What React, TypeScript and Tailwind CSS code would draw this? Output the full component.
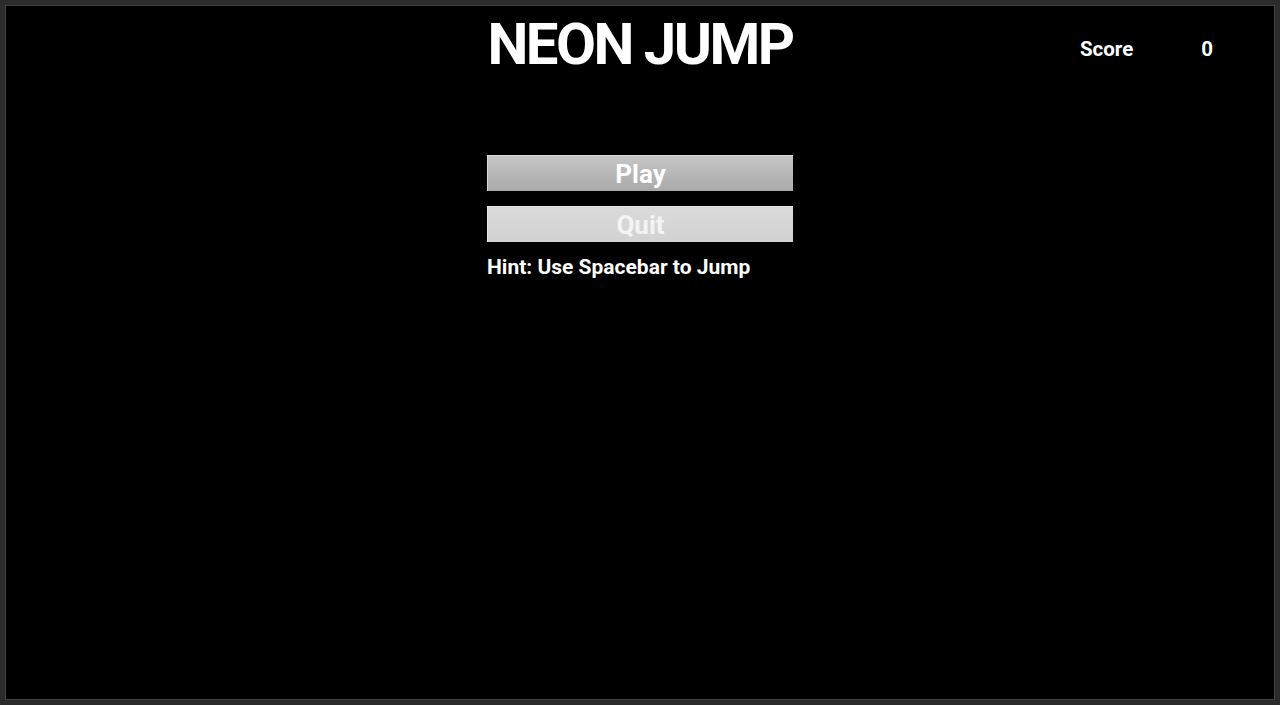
import { useState } from 'react';

export default function App() {
  const [score] = useState(0);

  return (
    <div
      className="h-[705px] w-full bg-black border-[5px] border-[#2b2b2b] shadow-[inset_0_0_0_1px_#404040] text-white"
      style={{ fontFamily: 'Roboto, "Liberation Sans", sans-serif' }}
    >
      <div className="grid grid-cols-[1fr_306px_1fr] pt-[9px]">
        <div />
        <div className="flex flex-col">
          <h1 className="text-center whitespace-nowrap text-[58px] leading-[60px] font-bold tracking-[-2.5px]">
            NEON JUMP
          </h1>
          <button className="mt-[81px] h-[36px] w-full border-t border-l border-[#d8d8d8] bg-gradient-to-b from-[#c6c6c6] to-[#a9a9a9] text-[26px] leading-[34px] font-bold text-white">
            Play
          </button>
          <button className="mt-[15px] h-[36px] w-full border-t border-l border-[#e6e6e6] bg-gradient-to-b from-[#dadada] to-[#d2d2d2] text-[26px] leading-[34px] font-bold text-[#f4f4f4]">
            Quit
          </button>
          <p className="mt-[13px] whitespace-nowrap text-[21px] leading-[24px] font-bold">
            Hint: Use Spacebar to Jump
          </p>
        </div>
        <div className="flex justify-end items-start pr-[62px] pt-[23px] gap-[68px] text-[20.5px] leading-[24px] font-bold">
          <span>Score</span>
          <span>{score}</span>
        </div>
      </div>
    </div>
  );
}
